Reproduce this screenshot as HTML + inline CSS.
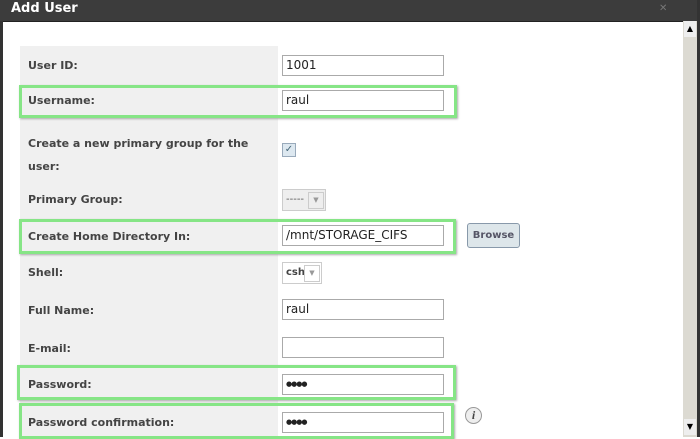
<!DOCTYPE html>
<html><head><style>
body{margin:0;width:700px;height:437px;overflow:hidden;background:#fff;font-family:"DejaVu Sans","Liberation Sans",sans-serif;position:relative}
.a{position:absolute}
.title{left:0;top:0;width:700px;height:21px;background:#3c3c3c;border-bottom:1px solid #222}
.title span{position:absolute;left:11px;top:1px;color:#fff;font-weight:bold;font-size:13px}
.lb{left:0;top:21px;width:3px;height:416px;background:#333}
.rb{left:697px;top:0;width:3px;height:437px;background:#333}
.sb{left:683px;top:21px;width:14px;height:416px;background:#dcdad2}
.col{left:20px;top:46px;width:258px;height:391px;background:#f0f0f0}
.lab{left:28px;font-size:11px;font-weight:bold;color:#444}
.in{left:282px;border:1px solid #aaa;background:#fff;font-size:12px;line-height:19px;padding-left:3px;box-sizing:border-box;width:162px;height:21px;color:#222}
.g{border:3px solid #86e586;box-sizing:border-box;box-shadow:1px 1px 2px #aaa}
.sel{left:282px;height:22px;border:1px solid #ccc;background:#eee;font-size:10px;color:#555;box-sizing:border-box}
</style></head><body>
<div class="a title"><span>Add User</span><span style="left:659px;top:3px;font-size:10px;color:#777">✕</span></div>
<div class="a lb"></div><div class="a rb"></div>
<div class="a sb"><div class="a" style="left:1px;top:0;width:12px;height:16px;background:#eee;font-size:8px;text-align:center;line-height:16px">▲</div><div class="a" style="left:1px;top:398px;width:12px;height:16px;background:#eee;font-size:8px;text-align:center;line-height:16px">▼</div></div>
<div class="a col"></div>
<div class="a g" style="left:19px;top:85px;width:438px;height:33px"></div>
<div class="a g" style="left:19px;top:219px;width:437px;height:35px"></div>
<div class="a g" style="left:17px;top:365px;width:439px;height:35px"></div>
<div class="a g" style="left:19px;top:403px;width:435px;height:36px"></div>

<div class="a lab" style="top:59px">User ID:</div>
<div class="a lab" style="top:94px">Username:</div>
<div class="a lab" style="top:132px;line-height:23px">Create a new primary group for the<br>user:</div>
<div class="a lab" style="top:193px">Primary Group:</div>
<div class="a lab" style="top:230px">Create Home Directory In:</div>
<div class="a lab" style="top:266px">Shell:</div>
<div class="a lab" style="top:304px">Full Name:</div>
<div class="a lab" style="top:342px">E-mail:</div>
<div class="a lab" style="top:378px">Password:</div>
<div class="a lab" style="top:416px">Password confirmation:</div>

<div class="a in" style="top:55px">1001</div>
<div class="a in" style="top:90px">raul</div>
<div class="a" style="left:282px;top:143px;width:12px;height:12px;border:1px solid #9ab;background:#dde8f0;font-size:10px;line-height:12px;text-align:center;color:#467">✓</div>
<div class="a sel" style="top:189px;width:44px"><span style="position:absolute;left:3px;top:4px">-----</span><span style="position:absolute;left:25px;top:2px;width:14px;height:15px;border:1px solid #ccc;font-size:7px;text-align:center;line-height:15px;color:#999">▼</span></div>
<div class="a in" style="top:225px">/mnt/STORAGE_CIFS</div>
<div class="a" style="left:467px;top:223px;width:53px;height:25px;border:1px solid #89a;border-radius:3px;background:#dde6ea;font-size:10px;font-weight:bold;color:#556;text-align:center;line-height:24px;box-sizing:border-box">Browse</div>
<div class="a sel" style="top:262px;width:40px;background:#fff"><span style="position:absolute;left:3px;top:4px;font-weight:bold;color:#444">csh</span><span style="position:absolute;left:21px;top:2px;width:14px;height:15px;border:1px solid #ccc;font-size:7px;text-align:center;line-height:15px;color:#999">▼</span></div>
<div class="a in" style="top:299px">raul</div>
<div class="a in" style="top:337px"></div>
<div class="a in" style="top:374px;font-size:7px;letter-spacing:-1px">●●●●</div>
<div class="a in" style="top:412px;font-size:7px;letter-spacing:-1px">●●●●</div>
<div class="a" style="left:465px;top:407px;width:15px;height:15px;border:1px solid #999;border-radius:50%;background:#eee;font-family:'Liberation Serif',serif;font-style:italic;font-weight:bold;font-size:12px;text-align:center;line-height:15px;color:#444">i</div>
</body></html>
